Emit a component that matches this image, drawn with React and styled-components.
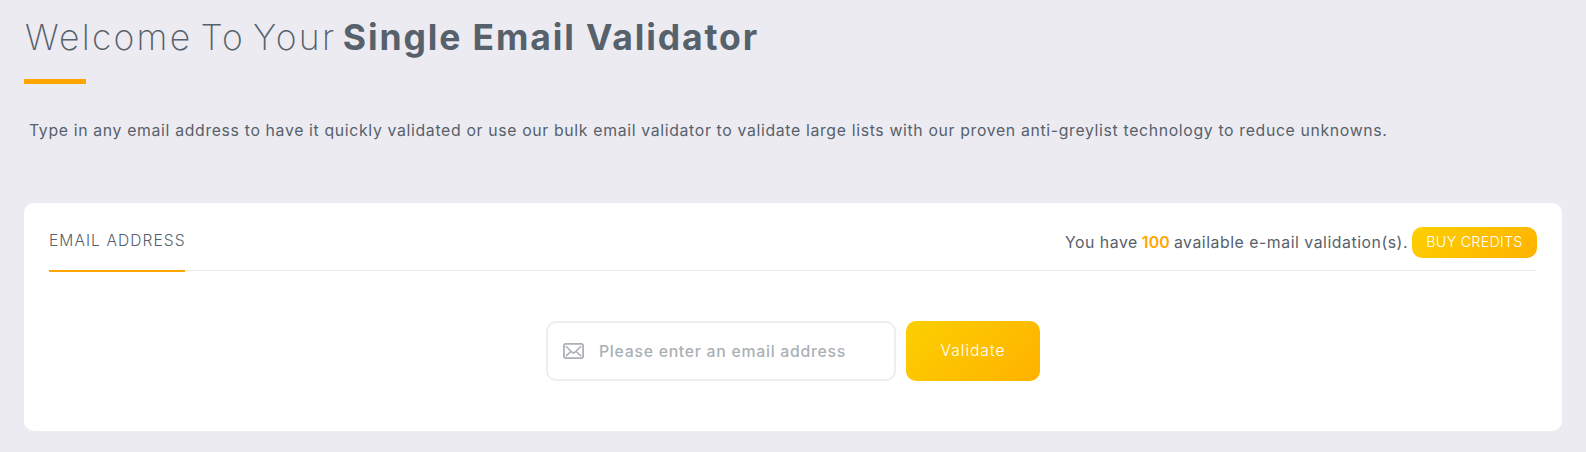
import React from 'react';
import styled, { createGlobalStyle } from 'styled-components';

const GlobalStyle = createGlobalStyle`
  *, *::before, *::after { box-sizing: border-box; }
  body {
    margin: 0;
    background: #ecebf2;
    color: #56616b;
    font-family: Inter, "Open Sans", sans-serif;
  }
`;

const Page = styled.main`
  min-height: 452px;
  padding: 16px 24px 20px;
`;

const Title = styled.h1`
  display: flex;
  align-items: baseline;
  gap: 6.5px;
  margin: 0;
  padding-left: 1px;
  font-size: 35.5px;
  line-height: 44px;
  font-weight: 200;
  letter-spacing: 2.23px;
  word-spacing: -4.2px;
  white-space: nowrap;

  strong {
    font-weight: 700;
    letter-spacing: 1.88px;
    word-spacing: 0;
  }
`;

const Accent = styled.div`
  width: 62px;
  height: 5px;
  margin-top: 19px;
  background: #ffa500;
`;

const Intro = styled.p`
  margin: 35px 0 0;
  padding-left: 5px;
  font-size: 15.8px;
  line-height: 24px;
  font-weight: 400;
  letter-spacing: 0.66px;
  white-space: nowrap;
`;

const Card = styled.section`
  height: 228px;
  margin-top: 60px;
  padding: 24px 25px;
  border-radius: 10px;
  background: #fff;
`;

const CardHeader = styled.header`
  display: flex;
  justify-content: space-between;
  height: 44px;
  border-bottom: 1px solid #ededed;
`;

const Tab = styled.div`
  width: 136px;
  margin-bottom: -2px;
  padding-top: 2px;
  border-bottom: 2px solid #ffa500;
  font-size: 15.6px;
  line-height: 24px;
  font-weight: 300;
  letter-spacing: 1.05px;
  white-space: nowrap;
`;

const Credits = styled.div`
  display: flex;
  align-items: flex-start;
`;

const Balance = styled.p`
  display: flex;
  gap: 4px;
  margin: 4px 4px 0 0;
  font-size: 15.8px;
  line-height: 24px;
  font-weight: 400;
  letter-spacing: 0.54px;
  white-space: nowrap;

  strong {
    color: #ffa500;
    font-weight: 600;
    letter-spacing: 0.2px;
  }
`;

const Button = styled.button`
  width: ${(p) => (p.$large ? 134 : 125)}px;
  height: ${(p) => (p.$large ? 60 : 31)}px;
  padding: 0 0 ${(p) => (p.$large ? 1 : 2)}px;
  border: 0;
  border-radius: 10px;
  background: linear-gradient(135deg, #fccf00, #ffb200);
  color: #fff;
  font-family: inherit;
  font-size: ${(p) => (p.$large ? 15.6 : 14.3)}px;
  font-weight: 300;
  letter-spacing: ${(p) => (p.$large ? 0.98 : 0.26)}px;
  white-space: nowrap;
`;

const Form = styled.form`
  display: flex;
  justify-content: center;
  gap: 10px;
  margin-top: 50px;
`;

const Field = styled.label`
  display: flex;
  align-items: center;
  width: 350px;
  height: 60px;
  padding: 0 15px;
  border: 2px solid #eee;
  border-radius: 10px;

  svg {
    flex: none;
    margin-right: 15px;
  }
`;

const EmailInput = styled.input`
  flex: 1;
  min-width: 0;
  padding: 0;
  border: 0;
  outline: 0;
  background: none;
  font-family: inherit;
  font-size: 15.8px;
  font-weight: 550;
  letter-spacing: 0.73px;

  &::placeholder {
    color: #abb0b5;
    opacity: 1;
  }
`;

const Envelope = () => (
  <svg width="21" height="16" viewBox="0 0 21 16" fill="none" stroke="#abb0b5" strokeWidth="1.8" strokeLinecap="round" strokeLinejoin="round">
    <rect x="0.9" y="0.9" width="19.2" height="14.2" rx="1.8" />
    <path d="M3.3 3.5 8.9 9.2Q10.5 10.7 12.1 9.2L17.7 3.5M3.4 12.6 7.3 9M17.6 12.6 13.7 9" strokeWidth="1.6" />
  </svg>
);

export default function App() {
  return (
    <>
      <GlobalStyle />
      <Page>
        <Title>
          <span>Welcome To Your</span>
          <strong>Single Email Validator</strong>
        </Title>
        <Accent />
        <Intro>
          Type in any email address to have it quickly validated or use our bulk email validator to validate large lists with our proven anti-greylist technology to reduce unknowns.
        </Intro>
        <Card>
          <CardHeader>
            <Tab>EMAIL ADDRESS</Tab>
            <Credits>
              <Balance>
                <span>You have</span>
                <strong>100</strong>
                <span>available e-mail validation(s).</span>
              </Balance>
              <Button type="button">BUY CREDITS</Button>
            </Credits>
          </CardHeader>
          <Form onSubmit={(e) => e.preventDefault()}>
            <Field>
              <Envelope />
              <EmailInput type="email" placeholder="Please enter an email address" />
            </Field>
            <Button $large type="submit">Validate</Button>
          </Form>
        </Card>
      </Page>
    </>
  );
}
